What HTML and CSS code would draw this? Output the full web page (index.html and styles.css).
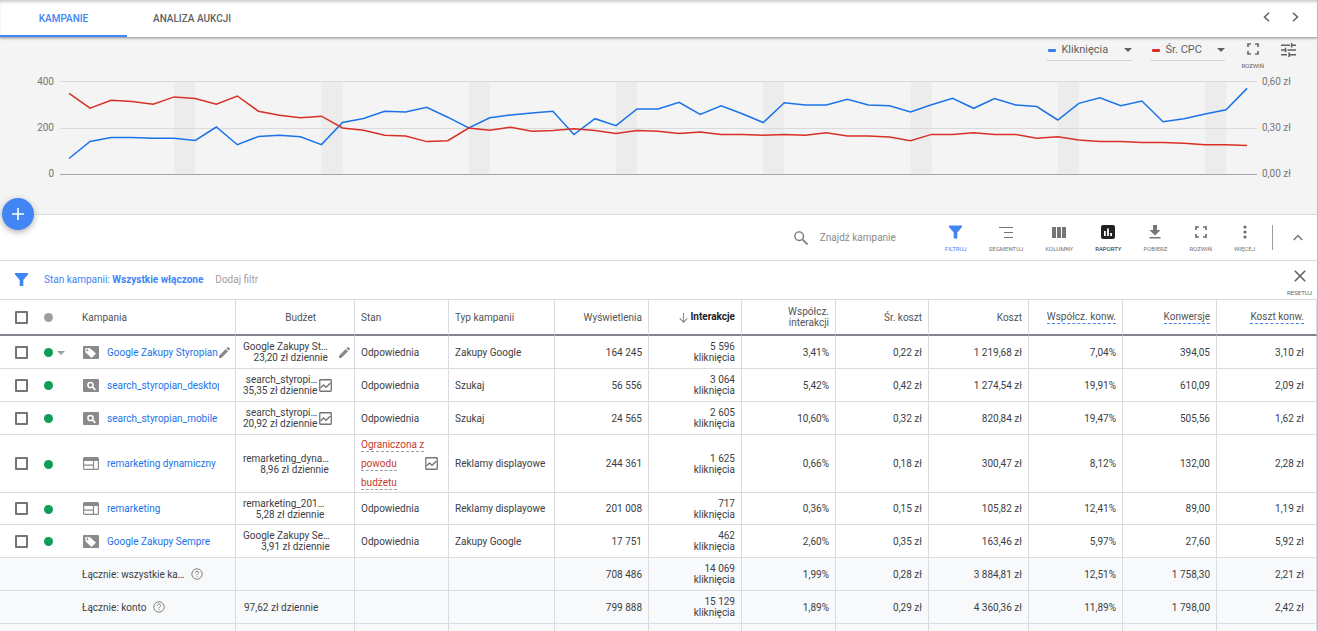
FILE: index.html
```html
<!DOCTYPE html>
<html lang="pl">
<head>
<meta charset="utf-8">
<title>Kampanie</title>
<link rel="stylesheet" href="styles.css">
</head>
<body>
<svg class="defs" aria-hidden="true">
  <symbol id="i-tag" viewBox="0 0 16 13"><rect width="16" height="13" rx="1" fill="#8a8a8a"/><path d="M2 2.6 6.6 2 13 7.6 8.6 12 2.6 6.6z" fill="#fff"/><circle cx="4.4" cy="4.3" r="1" fill="#8a8a8a"/></symbol>
  <symbol id="i-search" viewBox="0 0 16 13"><rect width="16" height="13" rx="1" fill="#8a8a8a"/><circle cx="7.5" cy="6" r="2.6" fill="none" stroke="#fff" stroke-width="1.5"/><path d="m9.4 7.9 3 3" stroke="#fff" stroke-width="1.6"/></symbol>
  <symbol id="i-display" viewBox="0 0 16 13"><rect x=".6" y=".6" width="14.8" height="11.8" rx="1" fill="#fff" stroke="#8a8a8a" stroke-width="1.2"/><path d="M0 1h16v3H0z" fill="#8a8a8a"/><path d="M10.5 4v8M1 8.2h9.5" stroke="#8a8a8a" stroke-width="1.2"/></symbol>
  <symbol id="i-pencil" viewBox="3 3 18 18"><path d="M3 17.25V21h3.75L17.8 9.94l-3.75-3.75zM20.7 7.04a1 1 0 0 0 0-1.41l-2.34-2.34a1 1 0 0 0-1.41 0l-1.83 1.83 3.75 3.75z" fill="#8a8a8a"/></symbol>
  <symbol id="i-trend" viewBox="0 0 13 13"><rect x=".75" y=".75" width="11.5" height="11.5" rx=".5" fill="none" stroke="#757575" stroke-width="1.3"/><path d="m1.5 9 3-3 2.5 2.3L11.5 4" fill="none" stroke="#757575" stroke-width="1.3"/></symbol>
  <symbol id="i-help" viewBox="0 0 12 12"><circle cx="6" cy="6" r="5.2" fill="none" stroke="#757575" stroke-width=".9"/><path d="M4.4 4.7c0-2 3.2-2 3.2 0 0 1.2-1.6 1.3-1.6 2.6M6 8.2v1" fill="none" stroke="#757575" stroke-width=".9"/></symbol>
  <symbol id="i-funnel" viewBox="0 0 13 13"><path d="M0 0h13v1.5L8.3 7v6H4.7V7L0 1.5z" fill="#4285f4"/></symbol>
  <symbol id="i-expand" viewBox="0 0 12 12"><path d="M1 4V1h3M8 1h3v3M11 8v3H8M4 11H1V8" fill="none" stroke="#6b6b6b" stroke-width="1.7"/></symbol>
</svg>
<div class="page">
  <nav class="tabs">
    <a class="tab active" href="#kampanie">KAMPANIE</a>
    <a class="tab" href="#aukcje">ANALIZA AUKCJI</a>
    <div class="pager">
      <button aria-label="Wstecz"><svg width="7" height="10" viewBox="0 0 7 10"><path d="M6 .7 1.5 5 6 9.3" fill="none" stroke="#616161" stroke-width="1.5"/></svg></button>
      <button aria-label="Dalej"><svg width="7" height="10" viewBox="0 0 7 10"><path d="M1 .7 5.5 5 1 9.3" fill="none" stroke="#616161" stroke-width="1.5"/></svg></button>
    </div>
  </nav>

  <section class="chart">
    <div class="chart-controls">
      <div class="metric blue"><select aria-label="Pierwsze dane"><option>Kliknięcia</option></select></div>
      <div class="metric red"><select aria-label="Drugie dane"><option>Śr. CPC</option></select></div>
      <button class="tool"><svg width="12" height="12"><use href="#i-expand"/></svg><span>ROZWIŃ</span></button>
      <button class="tune" aria-label="Ustawienia"><svg width="15" height="14" viewBox="0 0 15 14"><path d="M0 2.2h9M11 2.2h4M0 7h4M6.500 7H15M0 11.800h6M8.500 11.800H15M10.700 0v4.400M4.500 4.800v4.400M8.200 9.600V14" fill="none" stroke="#616161" stroke-width="1.6"/></svg></button>
    </div>
    <div class="plot">
      <div class="axis"><span>400</span><span>200</span><span>0</span></div>
      <svg class="lines" viewBox="-0.43 80 56.9 96" preserveAspectRatio="none" role="img" aria-label="Kliknięcia i średni CPC">
        <path class="band" d="M5 82h1v92h-1zM12 82h1v92h-1zM19 82h1v92h-1zM26 82h1v92h-1zM33 82h1v92h-1zM40 82h1v92h-1zM47 82h1v92h-1zM54 82h1v92h-1z"/>
        <path class="grid" d="M-1 81.500H57M-1 128.500H57"/>
        <path class="base" d="M-1 174.500H57"/>
        <polyline class="clicks" points="0,158.500 1,141.500 2,137.500 3,137.500 4,138.300 5,138.300 6,140.500 7,127 8,144.700 9,136.500 10,135.300 11,136.700 12,144.600 13,122.400 14,118.500 15,111.200 16,112 17,107.300 18,117.200 19,128 20,117.800 21,115 22,113 23,111.300 24,134.500 25,118.700 26,125.700 27,109 28,109 29,102.400 30,114.400 31,105.700 32,113.700 33,122.500 34,102.700 35,104.900 36,104.900 37,99.300 38,104.900 39,105.700 40,112 41,104.800 42,98.400 43,108.300 44,98.600 45,104.900 46,106.500 47,120 48,103.400 49,97.700 50,105.700 51,101 52,121.700 53,118.700 54,114 55,109.800 56,88.400"/>
        <polyline class="cpc" points="0,93.300 1,108.200 2,100.200 3,101.500 4,104.200 5,96.900 6,98.600 7,104.200 8,96 9,111.200 10,115.300 11,117.700 12,116.200 13,128 14,130.300 15,135.200 16,136 17,141.600 18,140.700 19,128 20,130.300 21,127.200 22,131.200 23,130.400 24,128.800 25,130.400 26,133.500 27,130.500 28,131.200 29,133.500 30,131.900 31,134.400 32,134.400 33,135.300 34,134.400 35,135.200 36,132.800 37,136 38,136 39,137 40,140.700 41,134.400 42,134.400 43,132.800 44,134.400 45,134.400 46,138.200 47,136.700 48,140 49,141.500 50,141.500 51,142.400 52,142.400 53,143.300 54,144.700 55,144.700 56,145.600"/>
      </svg>
      <div class="axis right"><span>0,60 zł</span><span>0,30 zł</span><span>0,00 zł</span></div>
    </div>
    <button class="fab" aria-label="Nowa kampania"><svg width="12" height="12"><path d="M6 0v12M0 6h12" stroke="#fff" stroke-width="1.600"/></svg></button>
  </section>

  <section class="toolbar">
    <label class="search">
      <svg width="14" height="14" viewBox="0 0 14 14"><circle cx="5.200" cy="5.200" r="4.300" fill="none" stroke="#757575" stroke-width="1.400"/><path d="m8.500 8.500 5 5" stroke="#757575" stroke-width="1.600"/></svg>
      <input type="text" placeholder="Znajdź kampanie" aria-label="Znajdź kampanie">
    </label>
    <div class="tools">
      <button class="tool on"><svg width="13" height="14"><use href="#i-funnel"/></svg><span>FILTRUJ</span></button>
      <button class="tool"><svg width="14" height="12" viewBox="0 0 14 12"><path d="M0 1.500h14M5 6.500h9M5 11.500h9" stroke="#757575"/></svg><span>SEGMENTUJ</span></button>
      <button class="tool"><svg width="14" height="11" viewBox="0 0 14 11"><path d="M0 0h4v11H0zM5 0h4v11H5zM10 0h4v11h-4z" fill="#757575"/></svg><span>KOLUMNY</span></button>
      <button class="tool dark"><svg width="14" height="14" viewBox="0 0 14 14"><rect width="14" height="14" rx="2" fill="#212121"/><path d="M3 6h1.800v5H3zM6.100 3.500h1.800V11H6.100zM9.200 8H11v3H9.200z" fill="#fff"/></svg><span>RAPORTY</span></button>
      <button class="tool"><svg width="12" height="14" viewBox="0 0 12 14"><path d="M4 0h4v5h3.500L6 10.500.5 5H4zM.5 12h11v1.500H.5z" fill="#757575"/></svg><span>POBIERZ</span></button>
      <button class="tool"><svg width="12" height="12"><use href="#i-expand"/></svg><span>ROZWIŃ</span></button>
      <button class="tool"><svg width="4" height="14" viewBox="0 0 4 14"><g fill="#6b6b6b"><circle cx="2" cy="2" r="1.600"/><circle cx="2" cy="7" r="1.600"/><circle cx="2" cy="12" r="1.600"/></g></svg><span>WIĘCEJ</span></button>
    </div>
    <button class="collapse" aria-label="Zwiń"><svg width="10" height="7" viewBox="0 0 10 7"><path d="M.7 6 5 1.500 9.300 6" fill="none" stroke="#757575" stroke-width="1.500"/></svg></button>
  </section>

  <section class="filters">
    <svg width="13" height="13"><use href="#i-funnel"/></svg>
    <button class="chip">Stan kampanii: <b>Wszystkie włączone</b></button>
    <button class="add">Dodaj filtr</button>
    <button class="tool reset"><svg width="12" height="12" viewBox="0 0 12 12"><path d="m.8.8 10.400 10.400M11.200.8.8 11.200" stroke="#616161" stroke-width="1.600"/></svg><span>RESETUJ</span></button>
  </section>

  <table class="grid-table">
    <colgroup><col class="w-check"><col class="w-dot"><col class="w-name"><col class="w-budget"><col class="w-94"><col class="w-type"><col class="w-94"><col class="w-93"><col class="w-94"><col class="w-93"><col class="w-100"><col class="w-94"><col class="w-94"><col class="w-100"></colgroup>
    <thead>
      <tr><th class="c"><input type="checkbox" aria-label="Zaznacz wszystkie"></th><th class="d"><i class="dot grey"></i></th><th class="l n">Kampania</th><th class="total-budget">Budżet</th><th class="l">Stan</th><th class="l">Typ kampanii</th><th>Wyświetlenia</th><th class="sorted"><svg width="9" height="10" viewBox="0 0 9 10"><path d="M4.500 0v9M.7 5.300l3.800 3.800 3.800-3.800" fill="none" stroke="#8a8a8a" stroke-width="1.100"/></svg> Interakcje</th><th>Współcz. interakcji</th><th>Śr. koszt</th><th>Koszt</th><th><span class="hint">Współcz. konw.</span></th><th><span class="hint">Konwersje</span></th><th><span class="hint">Koszt konw.</span></th></tr>
    </thead>
    <tbody>
      <tr><td class="c"><input type="checkbox" aria-label="Google Zakupy Styropian"></td><td class="d"><i class="dot"></i><i class="caret"></i></td><td class="n"><div class="name"><svg width="16" height="13"><use href="#i-tag"/></svg><a href="#1">Google Zakupy Styropian</a><svg width="11" height="11"><use href="#i-pencil"/></svg></div></td><td class="b"><div class="budget"><span>Google Zakupy St…<br>23,20 zł dziennie</span><svg class="edit" width="11" height="11"><use href="#i-pencil"/></svg></div></td><td class="l">Odpowiednia</td><td class="l">Zakupy Google</td><td>164 245</td><td>5 596<br>kliknięcia</td><td>3,41%</td><td>0,22 zł</td><td>1 219,68 zł</td><td>7,04%</td><td>394,05</td><td>3,10 zł</td></tr>
      <tr><td class="c"><input type="checkbox" aria-label="search_styropian_desktop"></td><td class="d"><i class="dot"></i></td><td class="n"><div class="name"><svg width="16" height="13"><use href="#i-search"/></svg><a href="#2">search_styropian_desktop</a></div></td><td class="b"><div class="budget"><span>search_styropi…<br>35,35 zł dziennie</span><svg width="13" height="13"><use href="#i-trend"/></svg></div></td><td class="l">Odpowiednia</td><td class="l">Szukaj</td><td>56 556</td><td>3 064<br>kliknięcia</td><td>5,42%</td><td>0,42 zł</td><td>1 274,54 zł</td><td>19,91%</td><td>610,09</td><td>2,09 zł</td></tr>
      <tr><td class="c"><input type="checkbox" aria-label="search_styropian_mobile"></td><td class="d"><i class="dot"></i></td><td class="n"><div class="name"><svg width="16" height="13"><use href="#i-search"/></svg><a href="#3">search_styropian_mobile</a></div></td><td class="b"><div class="budget"><span>search_styropi…<br>20,92 zł dziennie</span><svg width="13" height="13"><use href="#i-trend"/></svg></div></td><td class="l">Odpowiednia</td><td class="l">Szukaj</td><td>24 565</td><td>2 605<br>kliknięcia</td><td>10,60%</td><td>0,32 zł</td><td>820,84 zł</td><td>19,47%</td><td>505,56</td><td>1,62 zł</td></tr>
      <tr><td class="c"><input type="checkbox" aria-label="remarketing dynamiczny"></td><td class="d"><i class="dot"></i></td><td class="n"><div class="name"><svg width="16" height="13"><use href="#i-display"/></svg><a href="#4">remarketing dynamiczny</a></div></td><td class="b"><div class="budget"><span>remarketing_dyna…<br>8,96 zł dziennie</span></div></td><td class="l"><div class="limited"><span><u>Ograniczona z powodu budżetu</u></span><svg width="13" height="13"><use href="#i-trend"/></svg></div></td><td class="l">Reklamy displayowe</td><td>244 361</td><td>1 625<br>kliknięcia</td><td>0,66%</td><td>0,18 zł</td><td>300,47 zł</td><td>8,12%</td><td>132,00</td><td>2,28 zł</td></tr>
      <tr class="short"><td class="c"><input type="checkbox" aria-label="remarketing"></td><td class="d"><i class="dot"></i></td><td class="n"><div class="name"><svg width="16" height="13"><use href="#i-display"/></svg><a href="#5">remarketing</a></div></td><td class="b"><div class="budget"><span>remarketing_201…<br>5,28 zł dziennie</span></div></td><td class="l">Odpowiednia</td><td class="l">Reklamy displayowe</td><td>201 008</td><td>717<br>kliknięcia</td><td>0,36%</td><td>0,15 zł</td><td>105,82 zł</td><td>12,41%</td><td>89,00</td><td>1,19 zł</td></tr>
      <tr><td class="c"><input type="checkbox" aria-label="Google Zakupy Sempre"></td><td class="d"><i class="dot"></i></td><td class="n"><div class="name"><svg width="16" height="13"><use href="#i-tag"/></svg><a href="#6">Google Zakupy Sempre</a></div></td><td class="b"><div class="budget"><span>Google Zakupy Se…<br>3,91 zł dziennie</span></div></td><td class="l">Odpowiednia</td><td class="l">Zakupy Google</td><td>17 751</td><td>462<br>kliknięcia</td><td>2,60%</td><td>0,35 zł</td><td>163,46 zł</td><td>5,97%</td><td>27,60</td><td>5,92 zł</td></tr>
    </tbody>
    <tfoot>
      <tr><td class="c"></td><td class="d"></td><td class="n"><div class="sum">Łącznie: wszystkie ka…<svg width="12" height="12"><use href="#i-help"/></svg></div></td><td></td><td></td><td></td><td>708 486</td><td>14 069<br>kliknięcia</td><td>1,99%</td><td>0,28 zł</td><td>3 884,81 zł</td><td>12,51%</td><td>1 758,30</td><td>2,21 zł</td></tr>
      <tr><td class="c"></td><td class="d"></td><td class="n"><div class="sum">Łącznie: konto<svg width="12" height="12"><use href="#i-help"/></svg></div></td><td class="total-budget">97,62 zł dziennie</td><td></td><td></td><td>799 888</td><td>15 129<br>kliknięcia</td><td>1,89%</td><td>0,29 zł</td><td>4 360,36 zł</td><td>11,89%</td><td>1 798,00</td><td>2,42 zł</td></tr>
      <tr><td class="c"></td><td class="d"></td><td class="n"></td><td></td><td></td><td></td><td></td><td></td><td></td><td></td><td></td><td></td><td></td><td></td></tr>
    </tfoot>
  </table>
</div>
</body>
</html>
```
FILE: styles.css
```css
* { box-sizing: border-box; }
body { margin: 0; font: 10px/11px Roboto, "Liberation Sans", sans-serif; color: #3c4043; background: #fff; height: 100vh; overflow: hidden; }
button { border: 0; background: none; padding: 0; font: inherit; color: inherit; }
a { text-decoration: none; }
svg { flex: none; display: block; }
.defs { position: absolute; width: 0; height: 0; }
.page { min-height: 100vh; border-right: 1px solid #bdbdbd; }

.tabs { display: flex; height: 38px; border-bottom: 1px solid #b0b0b0; box-shadow: inset 0 3px 3px -1px #ccc, 0 1px 2px #bbb; position: relative; z-index: 1; }
.tab { display: flex; align-items: center; height: 37px; padding: 0 26px; font-weight: 500; color: #616161; }
.tab.active { width: 127px; padding: 2px 0 0; justify-content: center; color: #4285f4; border-bottom: 2px solid #4285f4; }
.pager { margin-left: auto; display: flex; gap: 22px; padding: 0 18px 4px 0; align-items: center; }

.chart { position: relative; height: 177px; background: #f4f4f4; border-bottom: 1px solid #dadce0; }
.chart-controls { display: flex; justify-content: flex-end; align-items: flex-start; height: 36px; padding-right: 21px; color: #616161; }
.metric { display: flex; align-items: center; height: 23px; padding-top: 2px; border-bottom: 1px solid #d5d5d5; margin-right: 18px; }
.metric::before { content: ""; width: 8px; height: 3px; margin: 0 5px 0 2px; border-radius: 1px; background: #3b7ded; }
.metric.red::before { background: #d93025; }
.metric::after { content: ""; border: 4px solid transparent; border-top-color: #616161; border-bottom: 0; }
.metric.red { margin-right: 16px; }
.metric select { appearance: none; border: 0; background: none; font: 11px/14px Roboto, sans-serif; color: #616161; padding: 0; width: 63px; }
.metric.red select { width: 52px; }
.tune { margin: 5px 0 0 17px; }
.plot { display: flex; margin-top: 6px; color: #757575; }
.axis { width: 54px; height: 103px; margin: -4px 6px 0 0; display: flex; flex-direction: column; justify-content: space-between; text-align: right; }
.axis.right { margin: -4px 0 0 5px; width: 55px; text-align: left; }
.lines { flex: 1; min-width: 0; height: 96px; }
.lines * { vector-effect: non-scaling-stroke; fill: none; }
.lines .band { fill: #ececec; }
.grid { stroke: #dadada; }
.base { stroke: #a6a6a6; }
.clicks { stroke: #1a73e8; stroke-width: 1.5; }
.cpc { stroke: #d93025; stroke-width: 1.5; }
.fab { position: absolute; left: 2px; bottom: -16px; width: 32px; height: 32px; border-radius: 50%; background: #4285f4; box-shadow: 0 2px 6px #aaa; display: grid; place-items: center; z-index: 1; }

.toolbar { display: flex; justify-content: flex-end; height: 46px; border-bottom: 1px solid #dadce0; }
.tool { display: flex; flex-direction: column; align-items: center; height: 32px; font-size: 6px; line-height: 8px; color: #757575; }
.tool svg { margin: auto; }
.tool span { margin-top: 2px; }
.chart-controls .tool, .tool.reset { color: #616161; }
.tool.on { color: #4285f4; }
.tool.dark { color: #212121; }
.search { display: flex; align-items: center; gap: 12px; margin-right: 25px; }
.search input { width: 100px; border: 0; padding: 0; outline: 0; background: none; font: 10px/14px Roboto, sans-serif; }
.search input::placeholder { color: #8a8a8a; }
.tools { display: flex; gap: 22px; padding: 6px 17px 0 0; }
.collapse { align-self: center; height: 25px; padding: 0 14px 0 20px; border-left: 1px solid #9e9e9e; }

.filters { display: flex; align-items: center; height: 38px; padding: 0 5px 1px 15px; }
.chip { margin-left: 16px; color: #4285f4; }
.add { margin-left: 12px; color: #9e9e9e; }
.reset { margin: 3px 0 0 auto; }

.grid-table { width: 100%; table-layout: fixed; border-spacing: 0; }
.w-check { width: 40px; } .w-dot { width: 42px; } .w-name { width: 154px; } .w-budget { width: 119px; }
.w-94 { width: 94px; } .w-93 { width: 93px; } .w-type { width: 106px; } .w-100 { width: 100px; }
th, td { height: 33px; padding: 0 6px 0 8px; text-align: right; border-right: 1px solid #dadce0; border-bottom: 1px solid #dadce0; }
.short td { height: 32px; }
th { height: 37px; font-weight: 400; color: #50545a; border-top: 1px solid #dadce0; border-bottom: 2px solid #80868b; }
th:last-child, td:last-child { padding-right: 12px; }
.l { text-align: left; padding: 0 6px; }
th.c, td.c { padding: 0 0 0 15px; text-align: left; border-right: 0; }
th.d, td.d { padding: 0 0 0 4px; text-align: left; border-right: 0; white-space: nowrap; }
.n { padding: 0 4px 0 0; text-align: left; }
.c input { appearance: none; display: block; width: 13px; height: 13px; margin: 0; border: 2px solid #757575; border-radius: 1px; }
.dot { display: inline-block; width: 9px; height: 9px; border-radius: 50%; background: #0f9d58; vertical-align: middle; }
.dot.grey { background: #9e9e9e; }
.caret { display: inline-block; border: 4px solid transparent; border-top-color: #9e9e9e; border-bottom: 0; margin-left: 4px; vertical-align: middle; }
.name { display: flex; align-items: center; padding-left: 1px; }
.name a { color: #1a73e8; width: 112px; margin-left: 8px; overflow: hidden; white-space: nowrap; }
.b { padding: 0 4px 0 7px; }
.budget { display: flex; align-items: center; gap: 2px; white-space: nowrap; }
.budget .edit { margin-left: auto; }
.total-budget { padding-right: 38px; white-space: nowrap; }
.sorted { font-weight: 700; color: #202124; white-space: nowrap; }
.sorted svg { display: inline-block; vertical-align: middle; }
.hint { display: inline-block; border-bottom: 1px dashed #4285f4; padding-bottom: 1px; }
.limited { display: flex; align-items: center; justify-content: space-between; padding-right: 4px; line-height: 19px; }
.limited span { width: 64px; color: #c5392f; }
.limited u { text-decoration: none; border-bottom: 1px dashed #9e9e9e; padding-bottom: 1px; }
.sum { display: flex; align-items: center; gap: 7px; }
tfoot td { background: #f8f9fb; }
```
